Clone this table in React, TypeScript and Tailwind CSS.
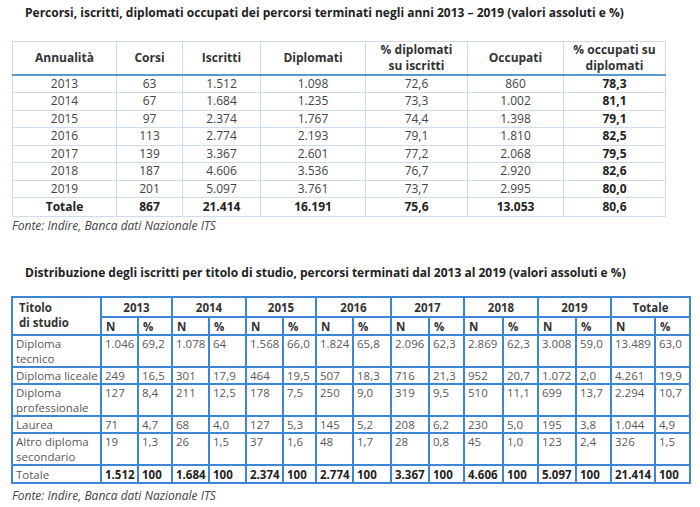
import React from "react";

const top = [
  ["2013", "63", "1.512", "1.098", "72,6", "860", "78,3"],
  ["2014", "67", "1.684", "1.235", "73,3", "1.002", "81,1"],
  ["2015", "97", "2.374", "1.767", "74,4", "1.398", "79,1"],
  ["2016", "113", "2.774", "2.193", "79,1", "1.810", "82,5"],
  ["2017", "139", "3.367", "2.601", "77,2", "2.068", "79,5"],
  ["2018", "187", "4.606", "3.536", "76,7", "2.920", "82,6"],
  ["2019", "201", "5.097", "3.761", "73,7", "2.995", "80,0"],
];

const topWidths = ["w-[104px]", "w-[66px]", "w-[78px]", "w-[105px]", "w-[102px]", "w-[96px]", "w-[102px]"];

const years = ["2013", "2014", "2015", "2016", "2017", "2018", "2019", "Totale"];

const rows: { label: string[]; tall: boolean; vals: string[] }[] = [
  { label: ["Diploma", "tecnico"], tall: true, vals: ["1.046", "69,2", "1.078", "64", "1.568", "66,0", "1.824", "65,8", "2.096", "62,3", "2.869", "62,3", "3.008", "59,0", "13.489", "63,0"] },
  { label: ["Diploma liceale"], tall: false, vals: ["249", "16,5", "301", "17,9", "464", "19,5", "507", "18,3", "716", "21,3", "952", "20,7", "1.072", "2,0", "4.261", "19,9"] },
  { label: ["Diploma", "professionale"], tall: true, vals: ["127", "8,4", "211", "12,5", "178", "7,5", "250", "9,0", "319", "9,5", "510", "11,1", "699", "13,7", "2.294", "10,7"] },
  { label: ["Laurea"], tall: false, vals: ["71", "4,7", "68", "4,0", "127", "5,3", "145", "5,2", "208", "6,2", "230", "5,0", "195", "3,8", "1.044", "4,9"] },
  { label: ["Altro diploma", "secondario"], tall: true, vals: ["19", "1,3", "26", "1,5", "37", "1,6", "48", "1,7", "28", "0,8", "45", "1,0", "123", "2,4", "326", "1,5"] },
];

const totals = ["1.512", "100", "1.684", "100", "2.374", "100", "2.774", "100", "3.367", "100", "4.606", "100", "5.097", "100", "21.414", "100"];

const botWidths = [
  "w-[37px]", "w-[34px]", "w-[37px]", "w-[37px]", "w-[37px]", "w-[33px]", "w-[37px]", "w-[38px]",
  "w-[38px]", "w-[35px]", "w-[39px]", "w-[35px]", "w-[38px]", "w-[35px]", "w-[44px]", "w-[35px]",
];

export default function App() {
  return (
    <div className="w-[700px] h-[507px] bg-white overflow-hidden font-['Open_Sans',sans-serif] text-[#333]">
      <h2 className="pl-[25px] pt-[5px] text-[12px] leading-[16px] font-bold text-[#222] whitespace-nowrap">
        Percorsi, iscritti, diplomati occupati dei percorsi terminati negli anni 2013 – 2019 (valori assoluti e %)
      </h2>

      <table className="ml-[12px] mt-[20px] w-[653px] table-fixed border-collapse text-[12px] text-center">
        <colgroup>
          {topWidths.map((w, i) => (
            <col key={i} className={w} />
          ))}
        </colgroup>
        <thead>
          <tr className="h-[33px] font-bold text-[#333] leading-[16px]">
            {["Annualità", "Corsi", "Iscritti", "Diplomati"].map((h) => (
              <th key={h} className="border border-[#cddcf0] border-b-2 border-b-[#5b97d3] font-bold">{h}</th>
            ))}
            <th className="border border-[#cddcf0] border-b-2 border-b-[#5b97d3] font-bold">% diplomati<br />su iscritti</th>
            <th className="border border-[#cddcf0] border-b-2 border-b-[#5b97d3] font-bold">Occupati</th>
            <th className="border border-[#cddcf0] border-b-2 border-b-[#5b97d3] font-bold">% occupati su<br />diplomati</th>
          </tr>
        </thead>
        <tbody>
          {top.map((r) => (
            <tr key={r[0]} className="h-[17.5px] leading-[14px] text-[#444]">
              {r.map((c, i) => (
                <td key={i} className={`border border-[#cddcf0] p-0 ${i === 6 ? "font-bold text-[#222]" : ""}`}>{c}</td>
              ))}
            </tr>
          ))}
          <tr className="h-[19px] leading-[14px] font-bold text-[#222]">
            {["Totale", "867", "21.414", "16.191", "75,6", "13.053", "80,6"].map((c, i) => (
              <td key={i} className="border border-[#cddcf0] p-0">{c}</td>
            ))}
          </tr>
        </tbody>
      </table>
      <p className="ml-[12px] mt-[2px] text-[12px] leading-[14px] italic text-[#444]">Fonte: Indire, Banca dati Nazionale ITS</p>

      <h2 className="pl-[25px] mt-[32px] text-[12px] leading-[16px] font-bold text-[#222] whitespace-nowrap">
        Distribuzione degli iscritti per titolo di studio, percorsi terminati dal 2013 al 2019 (valori assoluti e %)
      </h2>

      <table className="ml-[11px] mt-[15px] w-[678px] table-fixed border-collapse text-[11.5px] leading-[15px] text-left text-[#595959]">
        <colgroup>
          <col className="w-[89px]" />
          {botWidths.map((w, i) => (
            <col key={i} className={w} />
          ))}
        </colgroup>
        <thead>
          <tr className="h-[20px]">
            <th rowSpan={2} className="border-2 border-[#3d86d6] px-[6px] pt-[2px] align-top font-bold text-[#333]">
              Titolo<br />di studio
            </th>
            {years.map((y) => (
              <th key={y} colSpan={2} className="border-2 border-[#3d86d6] text-center font-bold text-[#333]">{y}</th>
            ))}
          </tr>
          <tr className="h-[18px]">
            {years.map((y) => (
              <React.Fragment key={y}>
                <th className="border-2 border-[#3d86d6] px-[4px] font-bold text-[#333]">N</th>
                <th className="border-2 border-[#3d86d6] px-[4px] font-bold text-[#333]">%</th>
              </React.Fragment>
            ))}
          </tr>
        </thead>
        <tbody>
          {rows.map((r) => (
            <tr key={r.label.join(" ")} className={r.tall ? "h-[32px]" : "h-[17px]"}>
              <td className="border-2 border-[#3d86d6] px-[3px] align-top whitespace-nowrap">
                {r.label.map((l, i) => (
                  <div key={i}>{l}</div>
                ))}
              </td>
              {r.vals.map((v, i) => (
                <td key={i} className="border-2 border-[#3d86d6] px-[3px] align-top whitespace-nowrap">{v}</td>
              ))}
            </tr>
          ))}
          <tr className="h-[18px]">
            <td className="border-2 border-[#3d86d6] px-[3px]">Totale</td>
            {totals.map((v, i) => (
              <td key={i} className="border-2 border-[#3d86d6] px-[3px] font-bold text-[#222] whitespace-nowrap">{v}</td>
            ))}
          </tr>
        </tbody>
      </table>
      <p className="ml-[12px] mt-[5px] text-[12px] leading-[14px] italic text-[#444]">Fonte: Indire, Banca dati Nazionale ITS</p>
    </div>
  );
}
